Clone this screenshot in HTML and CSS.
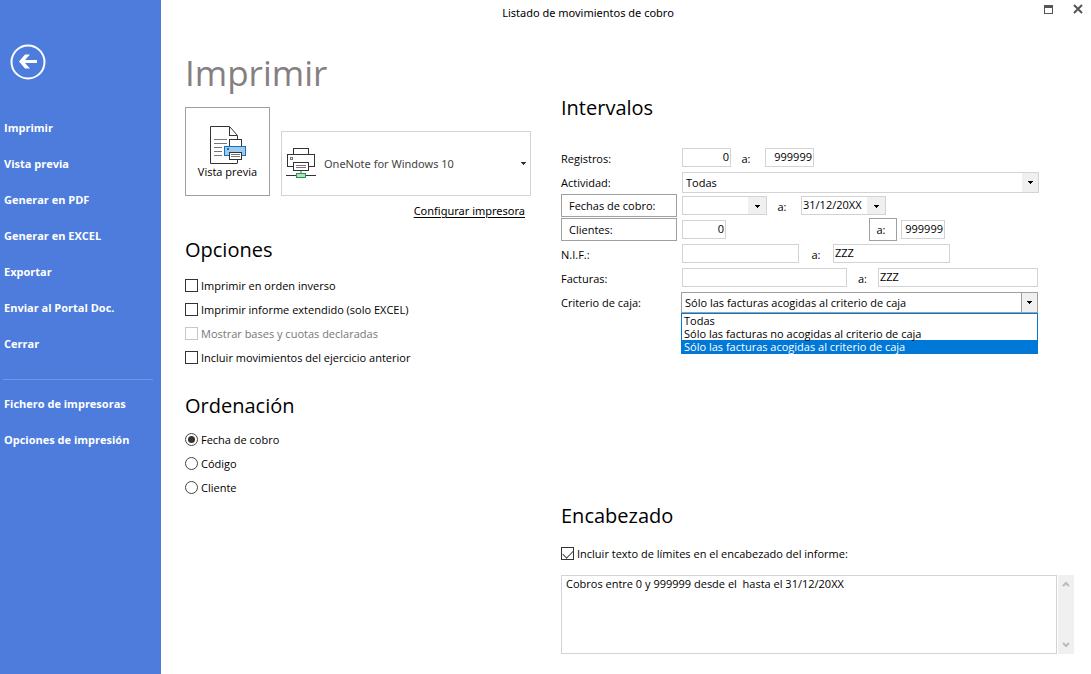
FILE: index.html
```html
<!DOCTYPE html>
<html lang="es">
<head>
<meta charset="utf-8">
<title>Listado de movimientos de cobro</title>
<link rel="stylesheet" href="styles.css">
</head>
<body>
<div class="app">
  <nav class="sidebar">
    <button class="back" type="button" aria-label="Volver">
      <svg width="36" height="36" viewBox="0 0 36 36"><circle cx="18" cy="18" r="16.5" fill="none" stroke="#fff" stroke-width="2"/><path d="M9 17.500 15 10.500h5l-5 5.500H27v3H15l5 5.500h-5z" fill="#fff"/></svg>
    </button>
    <a class="nav-link" href="#">Imprimir</a>
    <a class="nav-link" href="#">Vista previa</a>
    <a class="nav-link" href="#">Generar en PDF</a>
    <a class="nav-link" href="#">Generar en EXCEL</a>
    <a class="nav-link" href="#">Exportar</a>
    <a class="nav-link" href="#">Enviar al Portal Doc.</a>
    <a class="nav-link" href="#">Cerrar</a>
    <hr class="nav-rule">
    <a class="nav-link" href="#">Fichero de impresoras</a>
    <a class="nav-link" href="#">Opciones de impresión</a>
  </nav>

  <div class="content">
    <header class="titlebar">
      <span class="window-title">Listado de movimientos de cobro</span>
      <div class="window-buttons">
        <button class="icon-button" type="button" aria-label="Maximizar"><svg width="9" height="9" viewBox="0 0 9 9" shape-rendering="crispEdges"><path d="M0 0h9v9H0zM1 3v5h7V3z" fill="#555" fill-rule="evenodd"/></svg></button>
        <button class="icon-button" type="button" aria-label="Cerrar ventana"><svg width="10" height="10" viewBox="0 0 10 10"><path d="M1 1l8 8M9 1L1 9" stroke="#555" stroke-width="2"/></svg></button>
      </div>
    </header>

    <main class="columns">
      <div class="left">
        <h1 class="title">Imprimir</h1>
        <div class="print-row">
          <button class="preview" type="button">
            <svg width="36" height="38" viewBox="0 0 36 38" fill="none" shape-rendering="crispEdges">
              <path d="M27.500 37.500H.500V.500H19.500L27.500 9.500V13" stroke="#333" shape-rendering="auto"/>
              <path d="M19.500 1v8.500H27" stroke="#333"/>
              <path d="M27.500 34v3" stroke="#333"/>
              <path d="M4 13.500h13M4 17.500h13M4 21.500h8M4 25.500h8M4 29.500h8" stroke="#777"/>
              <path d="M19.500 20v-6.500h12V20" fill="#fff" stroke="#333"/>
              <path d="M14.500 20.500h21v9h-21z" fill="#9ccbee" stroke="#1a6fb8"/>
              <path d="M17 22h2v2h-2z" fill="#1a6fb8"/>
              <path d="M19.500 26.500h12v7h-12z" fill="#fff" stroke="#333"/>
              <path d="M21 28.500h9M21 30.500h9" stroke="#777"/>
            </svg>
            <span>Vista previa</span>
          </button>
          <button class="printer" type="button" aria-haspopup="listbox">
            <svg width="30" height="31" viewBox="0 0 30 31" fill="none" shape-rendering="crispEdges">
              <path d="M7.500 6V.500h15V6" stroke="#333"/>
              <path d="M7.500 18.500H1.500v-12h27v12h-6" stroke="#333"/>
              <path d="M4.500 9.500h2v2h-2z" stroke="#777"/>
              <path d="M7.500 14.500h15v8h-15z" stroke="#333"/>
              <path d="M10 17.500h10M10 19.500h10" stroke="#777"/>
              <path d="M15 23v3" stroke="#aaa" stroke-width="2"/>
              <path d="M0 27.500h30" stroke="#333"/>
              <path d="M10.500 25.500h9v4h-9z" fill="#b9dcc3" stroke="#12a14b"/>
            </svg>
            <span class="printer-name">OneNote for Windows 10</span>
            <svg width="5" height="3" viewBox="0 0 5 3" shape-rendering="crispEdges"><path d="M0 0h5v1H4v1H3v1H2V2H1V1H0z" fill="#333"/></svg>
          </button>
        </div>
        <a class="configure" href="#">Configurar impresora</a>

        <h2 class="heading">Opciones</h2>
        <div class="choices">
          <label class="choice"><input class="box" type="checkbox">Imprimir en orden inverso</label>
          <label class="choice"><input class="box" type="checkbox">Imprimir informe extendido (solo EXCEL)</label>
          <label class="choice off"><input class="box" type="checkbox" disabled>Mostrar bases y cuotas declaradas</label>
          <label class="choice"><input class="box" type="checkbox">Incluir movimientos del ejercicio anterior</label>
        </div>

        <h2 class="heading order-heading">Ordenación</h2>
        <div class="choices order">
          <label class="choice"><input class="dot" type="radio" name="orden" checked>Fecha de cobro</label>
          <label class="choice"><input class="dot" type="radio" name="orden">Código</label>
          <label class="choice"><input class="dot" type="radio" name="orden">Cliente</label>
        </div>
      </div>

      <div class="right">
        <h2 class="heading">Intervalos</h2>
        <form class="ranges">
          <div class="row">
            <label class="caption" for="reg1">Registros:</label>
            <input class="field number w-s" id="reg1" value="0">
            <label class="to" for="reg2">a:</label>
            <input class="field number w-s" id="reg2" value="999999">
          </div>
          <div class="row">
            <label class="caption" for="act">Actividad:</label>
            <div class="combo">
              <select class="select" id="act"><option>Todas</option></select>
              <span class="arrow"><svg width="5" height="3" viewBox="0 0 5 3" shape-rendering="crispEdges"><path d="M0 0h5v1H4v1H3v1H2V2H1V1H0z"/></svg></span>
            </div>
          </div>
          <div class="row">
            <button class="pick" type="button">Fechas de cobro:</button>
            <div class="date">
              <input class="date-input" aria-label="Fecha inicial">
              <button class="date-button" type="button" aria-label="Elegir fecha inicial"><svg width="5" height="3" viewBox="0 0 5 3" shape-rendering="crispEdges"><path d="M0 0h5v1H4v1H3v1H2V2H1V1H0z"/></svg></button>
            </div>
            <label class="to" for="date2">a:</label>
            <div class="date">
              <input class="date-input" id="date2" value="31/12/20XX">
              <button class="date-button" type="button" aria-label="Elegir fecha final"><svg width="5" height="3" viewBox="0 0 5 3" shape-rendering="crispEdges"><path d="M0 0h5v1H4v1H3v1H2V2H1V1H0z"/></svg></button>
            </div>
          </div>
          <div class="row">
            <button class="pick" type="button">Clientes:</button>
            <input class="field number w-xs" aria-label="Cliente inicial" value="0">
            <button class="pick-to" type="button">a:</button>
            <input class="field number w-xs" aria-label="Cliente final" value="999999">
          </div>
          <div class="row">
            <label class="caption" for="nif1">N.I.F.:</label>
            <input class="field w-m" id="nif1">
            <label class="to to-even" for="nif2">a:</label>
            <input class="field w-m" id="nif2" value="ZZZ">
          </div>
          <div class="row">
            <label class="caption" for="fac1">Facturas:</label>
            <input class="field w-l" id="fac1">
            <label class="to to-narrow" for="fac2">a:</label>
            <input class="field grow" id="fac2" value="ZZZ">
          </div>
          <div class="row">
            <label class="caption" for="caja">Criterio de caja:</label>
            <div class="combo open">
              <select class="select" id="caja"><option>Sólo las facturas acogidas al criterio de caja</option></select>
              <span class="arrow"><svg width="5" height="3" viewBox="0 0 5 3" shape-rendering="crispEdges"><path d="M0 0h5v1H4v1H3v1H2V2H1V1H0z"/></svg></span>
              <ul class="menu" role="listbox" aria-label="Criterio de caja">
                <li class="item" role="option">Todas</li>
                <li class="item" role="option">Sólo las facturas no acogidas al criterio de caja</li>
                <li class="item selected" role="option" aria-selected="true">Sólo las facturas acogidas al criterio de caja</li>
              </ul>
            </div>
          </div>
        </form>

        <h2 class="heading header-heading">Encabezado</h2>
        <label class="choice header-choice"><input class="box" type="checkbox" checked>Incluir texto de límites en el encabezado del informe:</label>
        <div class="memo">
          <textarea class="memo-text" aria-label="Texto del encabezado">Cobros entre 0 y 999999 desde el  hasta el 31/12/20XX</textarea>
          <div class="scroll">
            <button class="icon-button" type="button" aria-label="Subir"><svg width="8" height="6" viewBox="0 0 8 6"><path d="M1 5l3-3 3 3" fill="none" stroke="#bbb" stroke-width="2"/></svg></button>
            <button class="icon-button" type="button" aria-label="Bajar"><svg width="8" height="6" viewBox="0 0 8 6"><path d="M1 1l3 3 3-3" fill="none" stroke="#bbb" stroke-width="2"/></svg></button>
          </div>
        </div>
      </div>
    </main>
  </div>
</div>
</body>
</html>
```
FILE: styles.css
```css
* { box-sizing: border-box; }
body { margin: 0; background: #fff; color: #000; font: 11px/16px "Open Sans", "Noto Sans", sans-serif; }
button, input, select, textarea { font: inherit; color: inherit; margin: 0; border-radius: 0; }
button { padding: 0; background: #fff; border: 0; }

.app { display: flex; min-height: 100vh; }

.sidebar { flex: none; width: 161px; padding: 44px 0 0; background: #4d7cdc; display: flex; flex-direction: column; }
.back { width: 36px; height: 36px; margin: 0 0 30px 10px; background: none; }
.back svg { display: block; }
.nav-link { padding-left: 4px; line-height: 36px; color: #fff; font-weight: 700; text-decoration: none; }
.nav-rule { width: 150px; height: 1px; margin: 17px 0 6px 3px; border: 0; background: #7396e8; }

.content { flex: 1; min-width: 0; }
.titlebar { display: flex; height: 26px; align-items: flex-start; }
.window-title { flex: 1; padding-top: 5px; font-family: "Noto Sans", sans-serif; text-align: center; }
.window-buttons { flex: none; width: 76px; height: 18px; padding-right: 8px; display: flex; justify-content: flex-end; align-items: center; gap: 20px; }
.icon-button { background: none; line-height: 0; }

.columns { display: flex; gap: 30px; padding: 0 17px 20px 24px; }
.left { flex: none; width: 346px; }
.right { flex: 1; min-width: 0; padding-top: 70px; }

.title { margin: 22px 0 9px; color: #857f83; font-size: 35px; font-weight: 400; line-height: 50px; }
.heading { margin: 0; font-size: 20px; font-weight: 400; line-height: 24px; }

.print-row { display: flex; align-items: flex-end; gap: 11px; }
.preview { width: 85px; height: 89px; padding-top: 2px; border: 1px solid #a0a0a0; display: flex; flex-direction: column; align-items: center; justify-content: center; }
.printer { flex: 1; height: 65px; padding: 0 4px; border: 1px solid #d3d3d3; display: flex; align-items: center; gap: 8px; color: #444; font-family: "Noto Sans", sans-serif; text-align: left; }
.printer-name { flex: 1; }
.configure { display: block; margin: 7px 6px 0 0; color: #000; font-family: "Noto Sans", sans-serif; text-align: right; text-decoration: underline; text-underline-offset: 2px; }

.left .configure + .heading { margin-top: 19px; }
.choices { display: flex; flex-direction: column; margin-top: 12px; }
.choice { display: flex; align-items: center; gap: 3px; height: 24px; }
.off { color: #777; }
.order-heading { margin-top: 24px; }
.order { margin-top: 10px; }
.box { appearance: none; width: 13px; height: 13px; margin-bottom: 1px; border: 1px solid #333; background: #fff; display: grid; place-items: center; }
.box:disabled { border-color: #c8c8c8; }
.box:checked::before { content: ""; width: 9px; height: 5px; margin-bottom: 2px; border: solid #444; border-width: 0 0 1px 1px; transform: rotate(-45deg); }
.dot { appearance: none; width: 13px; height: 13px; margin-bottom: 1px; border: 1px solid #444; border-radius: 50%; display: grid; place-items: center; }
.dot:checked::before { content: ""; width: 7px; height: 7px; border-radius: 50%; background: #333; }

.ranges { margin: 26px 35px 0 0; }
.row { display: flex; height: 24px; align-items: flex-start; }
.caption { flex: none; width: 121px; padding-top: 5px; }
.to { flex: none; width: 34px; padding: 5px 4px 0 0; text-align: center; }
.to-even { padding-right: 0; }
.to-narrow { width: 31px; padding-right: 0; }
.field { height: 19px; margin-top: 2px; padding: 0 1px 2px; border: 1px solid #d3d3d3; outline: 0; line-height: 15px; }
.number { text-align: right; }
.w-xs { width: 44px; }
.w-s { width: 49px; }
.w-m { width: 117px; }
.w-l { width: 165px; }
.grow { flex: 1; min-width: 0; margin-right: 1px; }
.pick { flex: none; width: 116px; height: 23px; margin-right: 5px; padding-left: 7px; border: 1px solid #a0a0a0; text-align: left; }
.pick-to { flex: none; width: 28px; height: 23px; margin: 0 4px 0 143px; padding-right: 4px; border: 1px solid #a0a0a0; }
.date { display: flex; width: 85px; height: 19px; margin-top: 2px; border: 1px solid #d3d3d3; }
.date-input { flex: 1; min-width: 0; padding: 0 1px 1px; border: 0; outline: 0; background: none; }
.date-button { flex: none; width: 18px; background: #f0f0f0; line-height: 0; }
.combo { position: relative; flex: 1; min-width: 0; height: 21px; margin-top: 2px; }
.select { appearance: none; display: block; width: 100%; height: 21px; padding: 0 20px 0 3px; border: 1px solid #d3d3d3; background: #fff; outline: 0; }
.arrow { position: absolute; top: 1px; right: 1px; bottom: 1px; width: 16px; background: #f0f0f0; display: grid; place-items: center; pointer-events: none; }
.open { margin-left: -1px; margin-right: 1px; }
.open .select { border-color: #a0a0a0; }
.open .arrow { border-left: 1px solid #a0a0a0; }
.menu { position: absolute; top: 100%; left: 0; right: 0; margin: 0; padding: 0; border: 1px solid #0078d7; background: #fff; list-style: none; }
.item { padding-left: 2px; line-height: 13px; }
.selected { background: #0078d7; color: #fff; }

.header-heading { margin-top: 190px; }
.header-choice { margin-top: 14px; }
.memo { display: flex; gap: 1px; margin-top: 9px; height: 79px; }
.memo-text { flex: 1; min-width: 0; padding: 0 4px; border: 1px solid #d3d3d3; outline: 0; resize: none; }
.scroll { flex: none; width: 16px; padding: 6px 0; background: #f0f0f0; display: flex; flex-direction: column; align-items: center; justify-content: space-between; }
```
